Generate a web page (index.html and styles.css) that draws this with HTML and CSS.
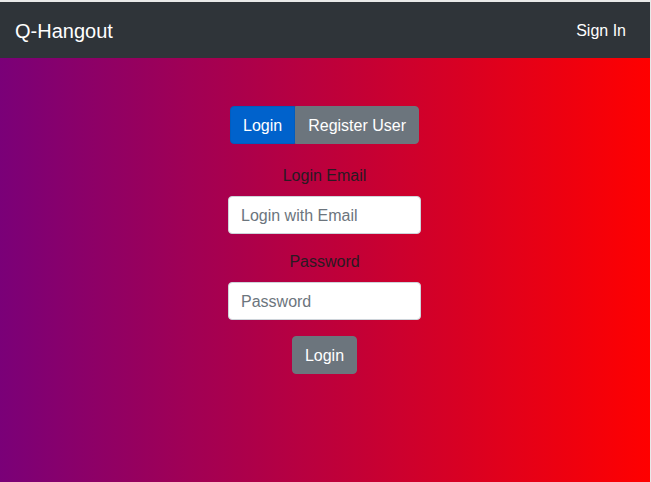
FILE: index.html
```html
<!DOCTYPE html>
<html lang="en">
<head>
<meta charset="utf-8">
<title>Q-Hangout</title>
<link rel="stylesheet" href="styles.css">
</head>
<body>
<div class="app">
  <nav class="navbar">
    <a class="brand" href="#">Q-Hangout</a>
    <a class="nav-link" href="#">Sign In</a>
  </nav>
  <main class="hero">
    <div class="btn-group">
      <button class="btn btn-primary">Login</button>
      <button class="btn btn-secondary">Register User</button>
    </div>
    <form class="form">
      <div class="form-group">
        <label class="label" for="email">Login Email</label>
        <input class="input" id="email" type="email" placeholder="Login with Email">
      </div>
      <div class="form-group">
        <label class="label" for="pw">Password</label>
        <input class="input" id="pw" type="password" placeholder="Password">
      </div>
      <button class="btn btn-secondary btn-round" type="button">Login</button>
    </form>
  </main>
</div>
</body>
</html>
```
FILE: styles.css
```css
* { box-sizing: border-box; }
html { background: #e9e9e9; height: 100%; }
body {
  margin: 0;
  padding: 2px 1px 0 0;
  height: 100%;
  font-family: "Liberation Sans", Arial, sans-serif;
  font-size: 16px;
  line-height: 1.5;
  color: #212529;
}
.app { display: flex; flex-direction: column; height: 100%; }
.navbar {
  height: 56px;
  flex: none;
  background: #2f3439;
  display: flex;
  align-items: center;
  justify-content: space-between;
  padding: 1px 24px 0 15px;
}
.brand { color: #fff; font-size: 20px; text-decoration: none; }
.nav-link { color: #fff; font-size: 16px; text-decoration: none; }
.hero {
  flex: 1;
  background: linear-gradient(to right, #7a0078, #ff0000);
  display: flex;
  flex-direction: column;
  align-items: center;
  padding: 48px 1px 0 0;
}
.btn-group { display: flex; margin-bottom: 20px; }
.btn {
  font-family: inherit;
  font-size: 16px;
  line-height: 24px;
  padding: 7px 12px 5px;
  border: 1px solid transparent;
  color: #fff;
  cursor: pointer;
}
.btn-primary { background: #0062cc; border-color: #005cbf; border-radius: 4px 0 0 4px; }
.btn-secondary { background: #6c757d; border-color: #6c757d; border-radius: 0 4px 4px 0; }
.btn-round { border-radius: 4px; }
.form { display: flex; flex-direction: column; align-items: center; width: 193px; }
.form-group { display: flex; flex-direction: column; align-items: center; width: 100%; margin-bottom: 16px; }
.label { margin-bottom: 8px; padding-top: 1px; margin-top: -1px; color: #2a1a22; }
.input {
  width: 100%;
  height: 38px;
  padding: 7px 12px 5px;
  font-family: inherit;
  font-size: 16px;
  border: 1px solid #ced4da;
  border-radius: 4px;
  background: #fff;
  color: #495057;
}
.input::placeholder { color: #6c757d; }
```
